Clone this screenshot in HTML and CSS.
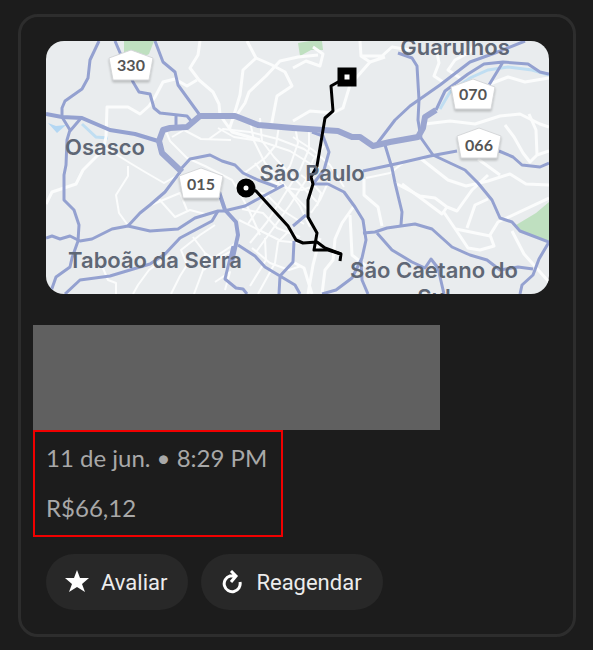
FILE: index.html
```
<!DOCTYPE html>
<html lang="pt-BR">
<head>
    <meta charset="UTF-8">
    <meta name="viewport" content="width=device-width, initial-scale=1.0">
    <title>Viagem</title>
    <link rel="stylesheet" href="styles.css">
</head>
<body>
    <main class="trip-card">
        <svg class="map" viewBox="46 41 503 253" role="img" aria-label="Mapa da viagem">
            <rect class="land" x="46" y="41" width="503" height="253"/>

            <!-- parques -->
            <g class="park">
                <path d="M124 41H154L149 54L142 58L124 52Z"/>
                <path d="M298 43L310 41H322L323 50L311 50L300 56Z"/>
                <path d="M549 202L536 213L516 225L524 233L549 241Z"/>
            </g>

            <!-- rios -->
            <path class="water-fill" d="M48 123L56 126L66 125L57 133Z"/>
            <path class="water" d="M82 124L96 137L108 138M440 109L450 92L470 78L488 70L508 67L532 70L549 75"/>

            <!-- ruas -->
            <g class="street">
                <path d="M200 41L198 55L190 68L199 80L213 92L219 104L220 115L232 132L260 140"/>
                <path d="M197 80L187 86L175 79L163 82L155 97L149 106L140 114L128 107L107 107L106 137L103 150L83 170L76 184L52 192L46 204"/>
                <path d="M247 41L256 58L243 70L240 95L234 115L229 130"/>
                <path d="M256 58L272 65L285 72L292 86L277 96L271 127"/>
                <path d="M318 55L298 57L280 61L266 76L249 92L245 103L236 116"/>
                <path d="M360 41L361 56L370 62L350 85L343 108L333 113L310 111L293 121"/>
                <path d="M361 56L382 56L392 47L410 50M370 62L385 57"/>
                <path d="M293 68L306 61L320 66L323 54L313 47"/>
                <path d="M436 48L439 63L434 76L443 82M460 78L448 70L455 60L470 52L476 41"/>
                <path d="M490 84L508 77L525 82L549 78M425 124L450 121L475 124L500 116L520 114L540 124L549 127"/>
                <path d="M505 125L514 137L523 153L530 162L537 155L536 130L529 114M537 155L549 151"/>
                <path d="M420 158L448 180L466 186L488 181L510 174L526 184L549 185M478 159L500 175"/>
                <path d="M397 184L420 196L435 198L447 207L457 211L472 190L488 175M443 211L456 230L468 248L480 250L494 246L490 235L498 222L549 198"/>
                <path d="M467 228L475 205L488 199M456 229L490 236M512 231L524 254L549 282M447 207L442 214L402 184"/>
                <path d="M364 179L364 195L378 207L382 226M354 206L342 223L335 239L333 260L325 270L322 294M350 215L352 255L366 266"/>
                <path d="M320 238L313 265L308 294M293 262L304 268L312 294"/>
            </g>
            <g class="street minor">
                <path d="M165 129L170 141L187 158L205 166L232 180L248 208L260 235M172 137L184 130L201 139L231 140"/>
                <path d="M106 148L130 163L145 172L164 183L180 174M128 166L128 176L116 195L119 213L127 224"/>
                <path d="M158 198L175 217L190 210L205 214M151 205L180 193L187 210"/>
                <path d="M170 255L149 270L138 285L133 294M102 266L108 280L116 283L116 294"/>
                <path d="M215 225L200 235L181 250L187 265L180 276L171 294M193 237L205 253L215 260L230 252M205 253L203 270L194 294"/>
                <path d="M239 241L218 255L204 270M215 282L230 272L225 290"/>
                <path d="M209 139L223 129L250 132L278 139L304 149L316 158"/>
                <path d="M218 128L234 137L260 141L290 151L314 166"/>
                <path d="M250 121L254 141L265 163L285 186L310 212"/>
                <path d="M260 118L262 141L274 157L290 174L317 202"/>
                <path d="M279 126L276 145L265 158L243 174"/>
                <path d="M295 126L298 143L290 166L277 184L262 203L248 224"/>
                <path d="M309 130L309 149L300 170L286 192L267 222L250 243"/>
                <path d="M324 146L313 160L306 180L290 205L272 230L256 252"/>
                <path d="M236 184L248 190L266 194L282 210L304 224"/>
                <path d="M242 209L263 213L277 228L300 237M239 220L257 229L281 241L300 243"/>
                <path d="M285 188L302 190L320 184M301 175L313 184L321 193L317 206"/>
                <path d="M255 163L268 180L286 187L300 206L310 227"/>
                <path d="M290 230L278 242L275 263L258 294M265 238L266 260L250 286M252 248L270 263L289 270L301 266"/>
                <path d="M330 178L320 200L311 213M293 137L313 150L330 165L344 187M403 163L390 173L366 178"/>
            </g>

            <!-- rodovias -->
            <g class="highway">
                <path d="M99 41L90 60L88 78L82 89L65 101L62 108L62 117L70 130L67 140L66 165L64 175L64 200L74 210L79 225L78 241L72 258L70 267L56 277L50 294M82 117L70 131"/>
                <path d="M115 41L121 55L133 82L139 92L150 94L154 108L160 113L187 116L192 122M176 115L176 126"/>
                <path d="M155 41L163 62L175 72L178 85L199 114"/>
                <path d="M376 145L395 120L410 106L440 85L470 62L495 53L525 41"/>
                <path d="M398 53L412 58L417 66L419 100L418 120L421 138L433 155L450 163L465 170L478 183L492 200L500 218L512 222L520 231L549 242"/>
                <path d="M436 110L445 91L468 74L484 64L503 62L528 64L540 72L549 74M503 62L489 85"/>
                <path d="M363 171L400 163L430 156L457 151M499 151L513 157L522 165L540 167L549 163"/>
                <path d="M385 145L392 168L395 183L402 212L401 225"/>
                <path d="M312 132L323 136L329 152L324 170L313 184L328 184L344 192L355 207L363 220L366 240L362 258L352 278L336 290L322 294"/>
                <path d="M363 233L375 232L387 228L415 224L432 229L452 247L470 255L487 260L500 270L518 267L533 269"/>
                <path d="M377 233L392 250L412 262L425 268L431 259L438 268L444 294M549 242L539 259L533 275L522 285L520 294M361 260L362 280L368 294"/>
                <path d="M180 170L190 159L210 155L222 161L235 165L243 173L258 180L277 187"/>
                <path d="M180 172L165 192L150 205L140 213L128 226"/>
                <path d="M46 238L52 236L60 239L70 236L80 241L92 239L112 229L128 226L150 231L178 229L195 218L218 211L224 211L245 206L284 185"/>
                <path d="M218 211L212 221L180 238L165 254L150 264L110 276L80 280L65 294"/>
                <path d="M238 245L255 256L265 267L280 276L295 285L300 294M280 276L279 294M280 276L293 262L294 241M293 226L306 215"/>
                <path d="M233 246L225 279L236 288L243 289L247 294"/>
            </g>
            <g class="highway wide">
                <path d="M46 114L62 117L82 118L110 130L135 134L158 141"/>
                <path d="M219 192L225 210L236 222L238 235L232 262"/>
            </g>
            <g class="highway main">
                <path d="M182 172L162 153L159 141L163 130L170 128L187 127L200 116L235 116L258 125L293 128L338 131L352 137L360 137L373 146L390 142L418 137L423 128L425 117L436 110"/>
            </g>

            <!-- trajeto -->
            <path class="route" d="M347 77L331 86L333 111L325 118L317 166L311 177L313 184L308 200L308 217L317 233L314 250L328 250L341 254L340 261"/>
            <path class="route" d="M246 188L256 191L288 226L296 240L303 243L317 242L325 248L341 254"/>
            <rect class="stop" x="341" y="71" width="12" height="12"/>
            <circle class="stop" cx="246" cy="188" r="6"/>

            <g class="shield">
                <path d="M131 50L153 58L149 80H113L109 58Z"/>
                <path d="M201 168L223 176L219 198H183L179 176Z"/>
                <path d="M473 79L495 87L491 109H455L451 87Z"/>
                <path d="M479 128L501 136L497 158H461L457 136Z"/>
            </g>
            <g class="shield-text">
                <text x="131" y="71">330</text>
                <text x="201" y="190">015</text>
                <text x="473" y="100">070</text>
                <text x="479" y="151">066</text>
            </g>

            <g class="place">
                <text x="105" y="155">Osasco</text>
                <text x="455" y="55">Guarulhos</text>
                <text x="312" y="181">São Paulo</text>
                <text x="155" y="268">Taboão da Serra</text>
                <text x="434" y="278">São Caetano do</text>
                <text x="434" y="305">Sul</text>
            </g>
        </svg>

        <div class="redacted"></div>

        <div class="trip-info">
            <p>11 de jun. • 8:29 PM</p>
            <p>R$66,12</p>
        </div>

        <div class="actions">
            <button type="button" class="action">
                <svg class="icon" viewBox="0 0 24 24" aria-hidden="true">
                    <path class="star" d="M12 0L15 8H24L17 14L20 22L12 17L4 22L7 14L0 8H9Z"/>
                </svg>
                Avaliar
            </button>
            <button type="button" class="action">
                <svg class="icon" viewBox="0 0 24 24" aria-hidden="true">
                    <path class="arrow" d="M20 12A8 8 0 1 1 10 6H16M11 1L16 6L11 12"/>
                </svg>
                Reagendar
            </button>
        </div>
    </main>
</body>
</html>
```
FILE: styles.css
```
body {
    margin: 0;
    padding: 14px 17px 13px 18px;
    background-color: #1c1c1c;
    font-family: Roboto, sans-serif;
}

.trip-card {
    padding: 24px 12px;
    border: 3px solid #2d2d2d;
    border-radius: 20px;
}

/* mapa */
.map {
    display: block;
    box-sizing: border-box;
    width: calc(100% - 25px);
    margin: 0 12px 31px 13px;
    border-radius: 18px;
    overflow: hidden;
}

.land {
    fill: #e9ecee;
}

.park {
    fill: #bfe0c0;
}

.water-fill {
    fill: #b4d7f3;
}

.water {
    fill: none;
    stroke: #c0def2;
    stroke-width: 3;
}

.street {
    fill: none;
    stroke: #fbfcfc;
    stroke-width: 3;
    stroke-linejoin: round;
}

.minor {
    stroke-width: 2;
}

.highway {
    fill: none;
    stroke: #94a1d0;
    stroke-width: 3;
    stroke-linejoin: round;
}

.wide {
    stroke-width: 4;
}

.main {
    stroke: #9ba6d0;
    stroke-width: 6;
}

.route {
    fill: none;
    stroke: #000;
    stroke-width: 3;
    stroke-linejoin: round;
}

.stop {
    fill: #fff;
    stroke: #000;
    stroke-width: 7;
}

.shield {
    fill: #fff;
    stroke: #d5d7d9;
    filter: drop-shadow(0 2px 1px #0003);
}

.shield-text {
    fill: #555;
    font: bold 16px Lato, sans-serif;
    text-anchor: middle;
}

.place {
    fill: #5f6775;
    font: 600 22px Inter, sans-serif;
    text-anchor: middle;
}

/* dados da viagem */
.redacted {
    width: 77%;
    height: 105px;
    background-color: #606060;
}

.trip-info {
    box-sizing: border-box;
    width: 250px;
    padding: 7px 11px 8px;
    border: 2px solid #f00000;
    color: #a8a8a8;
    font-family: Lato, sans-serif;
    font-size: 24px;
    line-height: 38px;
    white-space: nowrap;
}

.trip-info p {
    margin: 0;
}

.trip-info p + p {
    margin-top: 12px;
}

/* botões */
.actions {
    display: flex;
    gap: 13px;
    margin: 17px 13px 0;
}

.action {
    display: flex;
    align-items: center;
    gap: 12px;
    height: 56px;
    padding: 0 21px 0 19px;
    border: none;
    border-radius: 28px;
    background-color: #282828;
    color: #ececec;
    font-family: Roboto, sans-serif;
    font-size: 22px;
    cursor: pointer;
}

.icon {
    width: 24px;
    height: 24px;
}

.star {
    fill: #fff;
}

.arrow {
    fill: none;
    stroke: #fff;
    stroke-width: 3;
}
```
